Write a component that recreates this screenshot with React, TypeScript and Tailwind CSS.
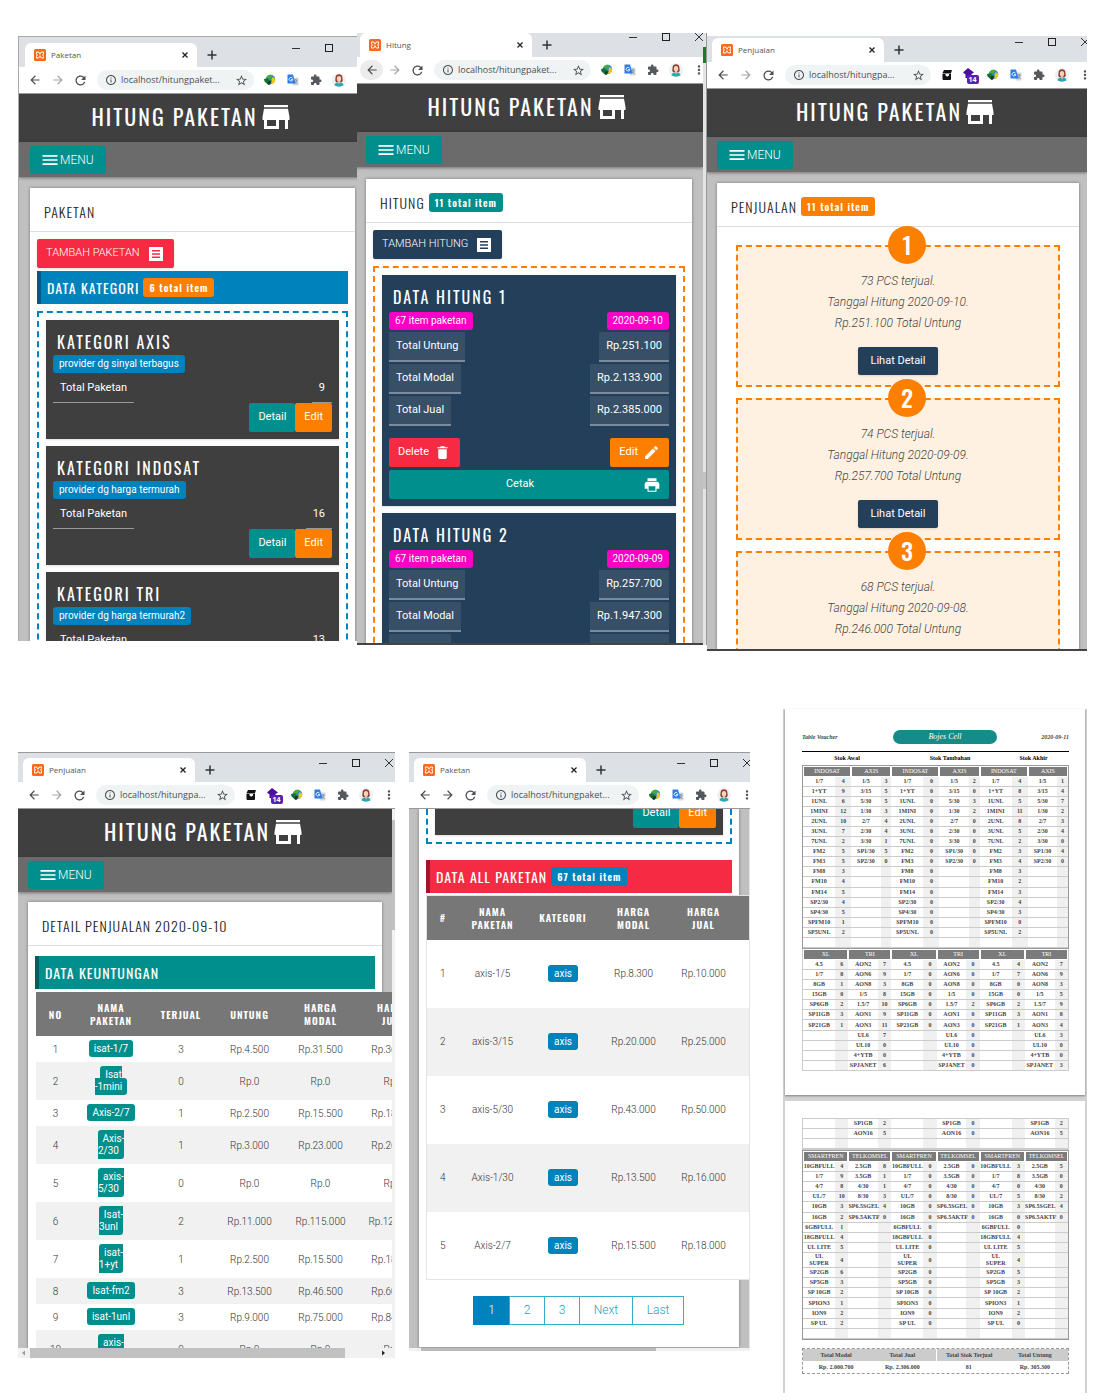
import type { ReactNode } from "react";
import { MdArrowBack, MdArrowForward, MdInfoOutline, MdMoreVert, MdRefresh, MdStarBorder } from "react-icons/md";
import { IoMdCreate, IoMdMenu, IoMdPrint, IoMdTrash } from "react-icons/io";

/* ---------- icons ---------- */

function Favicon() {
  return (
    <svg viewBox="0 0 24 24" className="size-3 shrink-0" aria-hidden="true">
      <rect width="24" height="24" rx="3" fill="#fb6a1c" />
      <path
        d="M5 6H8Q11 6 11 9V10H13V9Q13 6 16 6H19V9Q19 12 17 12Q19 12 19 15V18H16Q13 18 13 15V14H11V15Q11 18 8 18H5V15Q5 12 7 12Q5 12 5 9Z"
        fill="none"
        stroke="#fff"
        strokeWidth="2"
      />
    </svg>
  );
}

function StoreIcon() {
  return (
    <svg viewBox="0 0 24 24" className="size-9 shrink-0" fill="currentColor" aria-hidden="true">
      <path d="M20 4H4v1.500h16V4zm1 10v-2l-1-5.500H4l-1 5.500v2h1v6h10v-6h4v6h2v-6h1zm-9 4H6v-4h6v4z" />
    </svg>
  );
}

function ListIcon() {
  return (
    <svg viewBox="0 0 14 14" className="size-[14px] shrink-0" aria-hidden="true">
      <path d="M0 0H14V14H0ZM3 3V4.500H11V3ZM3 6.250V7.750H11V6.250ZM3 9.500V11H11V9.500Z" fill="currentColor" fillRule="evenodd" />
    </svg>
  );
}

function PuzzleIcon() {
  return (
    <svg viewBox="0 0 24 24" className="size-3" fill="#55595e" aria-hidden="true">
      <path d="M20.500 11H19V7c0-1.100-.9-2-2-2h-4V3.500C13 2.120 11.880 1 10.500 1S8 2.120 8 3.500V5H4c-1.100 0-1.990.9-1.990 2v3.800H3.500c1.490 0 2.700 1.210 2.700 2.700s-1.210 2.700-2.700 2.700H2V20c0 1.100.9 2 2 2h3.800v-1.500c0-1.490 1.210-2.700 2.700-2.700 1.490 0 2.700 1.210 2.700 2.700V22H17c1.100 0 2-.9 2-2v-4h1.500c1.380 0 2.500-1.120 2.500-2.500S21.880 11 20.500 11z" />
    </svg>
  );
}

function GlobeIcon() {
  return (
    <svg viewBox="0 0 24 24" className="size-3" aria-hidden="true">
      <circle cx="13" cy="11" r="9.500" fill="#1b8fd0" />
      <path d="M6 5C9 1 15 0 18 3C17 7 12 6 11 9C9 12 5 12 4 9Z" fill="#4caf2a" />
      <path d="M16 7C20 6 22 9 22.500 12C22 16 19 19 16 20C12 18 17 14 15 12Z" fill="#f2c811" />
      <path d="M0 10L9 8L9 12L14 13L9 22L1 15Z" fill="#14702c" />
      <path d="M9 14L15 15L11 22L7 20Z" fill="#153a2a" />
    </svg>
  );
}

function TranslateIcon() {
  return (
    <svg viewBox="0 0 24 24" className="size-3" aria-hidden="true">
      <rect x="11" y="7" width="12" height="16" rx="1.500" fill="#d5d8dc" />
      <path d="M14 12H21M17.500 10V12M20 12C19 16 17 18 15 19M15.500 14C17 17 19 18 21 19" stroke="#6d7b8c" strokeWidth="1.400" fill="none" />
      <path d="M2 1H12L17 19H2Q1 19 1 18V2Q1 1 2 1Z" fill="#2f7de9" />
      <path d="M11 8.500A3.600 3.600 0 1 0 11.500 11H8" stroke="#fff" strokeWidth="1.700" fill="none" />
    </svg>
  );
}

function AvatarIcon() {
  return (
    <svg viewBox="0 0 24 24" className="size-[14px]" aria-hidden="true">
      <circle cx="12" cy="12" r="12" fill="#eef1f1" />
      <path d="M12 2C6 2 6 7 6 10C5 13 6 15 8 16H16C18 15 19 13 18 10C18 7 18 2 12 2Z" fill="#8a3d33" />
      <path d="M4 21C5 17 9 16 12 16S19 17 20 21Q12 26 4 21Z" fill="#2aa7b8" />
      <path d="M10 14H14V17L12 19L10 17Z" fill="#eab995" />
      <ellipse cx="12" cy="10" rx="3.800" ry="4.800" fill="#f7d2b4" />
    </svg>
  );
}

function ArchiveIcon() {
  return (
    <svg viewBox="0 0 24 24" className="size-3" aria-hidden="true">
      <path d="M6 2H22L20 8H3Z" fill="#111" />
      <path d="M3 9H20V20Q20 22 18 22H5Q3 22 3 20Z" fill="#111" />
      <path d="M9 10H16V13L12.500 15.500L9 13Z" fill="#fff" />
    </svg>
  );
}

function CounterIcon() {
  return (
    <span className="relative block size-[14px]">
      <svg viewBox="0 0 28 28" className="size-[14px]" aria-hidden="true">
        <path d="M10 0L22 9L17 12V20H5V13L0 9Z" fill="#4a0f9f" />
      </svg>
      <span className="absolute left-1 top-[7px] rounded-[2px] bg-[#5b1fb0] px-[2px] font-['Open_Sans',sans-serif] text-[7px] font-bold leading-[9px] text-white">
        14
      </span>
    </span>
  );
}

/* ---------- browser chrome ---------- */

function ChromeButton({ label, className = "", children }: { label: string; className?: string; children: ReactNode }) {
  return (
    <button type="button" aria-label={label} className={`grid h-5 w-[23px] shrink-0 place-items-center ${className}`}>
      {children}
    </button>
  );
}

type ChromeProps = {
  title: string;
  url: string;
  id: string;
  stripClass: string;
  controlsClass: string;
  wrapClass: string;
  extra?: boolean;
  backActive?: boolean;
  forwardOn?: boolean;
};

function Chrome({ title, url, id, stripClass, controlsClass, wrapClass, extra, backActive, forwardOn }: ChromeProps) {
  return (
    <div className={`font-['Open_Sans',sans-serif] ${wrapClass}`}>
      <div className={`-mr-[5px] flex bg-[#dde0e5] ${stripClass}`}>
        <div className="flex h-6 w-[172px] shrink-0 items-center gap-[5px] rounded-t-md bg-white pl-[9px] pr-[6px]">
          <Favicon />
          <span className="flex-1 text-[8px] text-[#555]">{title}</span>
          <button type="button" aria-label="Close tab">
            <svg viewBox="0 0 12 12" className="size-3" stroke="#222" strokeWidth="1.300" aria-hidden="true">
              <path d="M3.500 3.500L8.500 8.500M8.500 3.500L3.500 8.500" />
            </svg>
          </button>
        </div>
        <button type="button" aria-label="New tab" className="ml-[9px] grid h-6 w-3 place-items-center">
          <svg viewBox="0 0 12 12" className="size-3" stroke="#333" strokeWidth="1.500" aria-hidden="true">
            <path d="M6 1.500V10.500M1.500 6H10.500" />
          </svg>
        </button>
        <div className={`ml-auto flex items-center ${controlsClass}`}>
          <button type="button" aria-label="Minimize" className="grid w-[33px] place-items-center">
            <svg viewBox="0 0 10 10" className="size-[10px]" stroke="#333" aria-hidden="true">
              <path d="M1 5.500H9" />
            </svg>
          </button>
          <button type="button" aria-label="Maximize" className="grid w-[33px] place-items-center">
            <svg viewBox="0 0 10 10" className="size-[10px]" stroke="#222" fill="none" aria-hidden="true">
              <rect x="1.500" y="1.500" width="7" height="7" />
            </svg>
          </button>
          <button type="button" aria-label="Close" className="grid w-[33px] place-items-center">
            <svg viewBox="0 0 10 10" className="size-[10px]" stroke="#333" aria-hidden="true">
              <path d="M1 1L9 9M9 1L1 9" />
            </svg>
          </button>
        </div>
      </div>
      <div className="flex h-[27px] items-center border-b border-[#999] bg-white pl-1 text-[#4b4f54]">
        <ChromeButton label="Back" className={backActive ? "rounded-full bg-[#ececec]" : ""}>
          <MdArrowBack size={14} />
        </ChromeButton>
        <ChromeButton label="Forward" className={forwardOn ? "" : "text-[#a3a6aa]"}>
          <MdArrowForward size={14} />
        </ChromeButton>
        <ChromeButton label="Reload">
          <MdRefresh size={15} />
        </ChromeButton>
        <div className="ml-[5px] mr-1 flex h-5 min-w-0 flex-1 items-center gap-1 rounded-full bg-[#f0f3f4] pl-2 pr-[6px]">
          <MdInfoOutline size={12} className="shrink-0" />
          <label htmlFor={id} className="sr-only">
            Address
          </label>
          <input id={id} readOnly value={url} className="w-0 min-w-0 flex-1 bg-transparent text-[9px] text-[#4b4f54] outline-none" />
          <button type="button" aria-label="Bookmark" className="shrink-0">
            <MdStarBorder size={13} />
          </button>
        </div>
        {extra && (
          <>
            <ChromeButton label="Archive">
              <ArchiveIcon />
            </ChromeButton>
            <ChromeButton label="Counter">
              <CounterIcon />
            </ChromeButton>
          </>
        )}
        <ChromeButton label="Download manager">
          <GlobeIcon />
        </ChromeButton>
        <ChromeButton label="Translate">
          <TranslateIcon />
        </ChromeButton>
        <ChromeButton label="Extensions">
          <PuzzleIcon />
        </ChromeButton>
        <ChromeButton label="Profile">
          <AvatarIcon />
        </ChromeButton>
        <ChromeButton label="More">
          <MdMoreVert size={14} />
        </ChromeButton>
      </div>
    </div>
  );
}

/* ---------- shared app parts ---------- */

const heading = "font-['Oswald','Liberation_Sans_Narrow','Liberation_Sans',sans-serif]";

function AppHeader({ padClass }: { padClass: string }) {
  return (
    <header>
      <div className="flex h-12 items-center justify-center bg-[#3f3f3f] pb-[3px] text-white">
        <h1 className={`${heading} whitespace-nowrap text-[22px] tracking-[2px]`}>HITUNG PAKETAN</h1>
        <StoreIcon />
      </div>
      <div className={`flex h-[35px] items-center bg-[#6b6b6b] shadow-[0_1px_3px_#0006] ${padClass}`}>
        <button type="button" className="flex h-7 items-center rounded-[2px] bg-[#008f8c] pl-[10px] pr-3 text-[12px] font-light text-white">
          <IoMdMenu size={20} />
          MENU
        </button>
      </div>
    </header>
  );
}

function Badge({ className, children }: { className: string; children: ReactNode }) {
  return (
    <span className={`${heading} rounded-[3px] px-[6px] text-[10px] font-semibold leading-[19px] tracking-[1px] text-white ${className}`}>
      {children}
    </span>
  );
}

function CardHead({ title, badge }: { title: string; badge?: ReactNode }) {
  return (
    <div className="flex h-11 items-center gap-1 border-b border-[#ddd] px-[14px] pt-1">
      <h2 className={`${heading} text-[14px] font-light tracking-[1px] text-[#222]`}>{title}</h2>
      {badge}
    </div>
  );
}

function SectionBar({ title, className, badge }: { title: string; className: string; badge?: ReactNode }) {
  return (
    <div className={`flex h-[33px] items-center gap-1 border-l-4 pl-[6px] ${className}`}>
      <h3 className={`${heading} text-[14px] tracking-[1px] text-white`}>{title}</h3>
      {badge}
    </div>
  );
}

const pill = "rounded-[3px] px-[6px] text-[10px] leading-[18px] text-white";
const btn = "flex h-[29px] items-center rounded-[2px] text-[11px] text-white";
const cardTitle = `${heading} pl-1 text-[16px] leading-6 tracking-[2px]`;

/* ---------- Paketan ---------- */

const categories = [
  { name: "KATEGORI AXIS", note: "provider dg sinyal terbagus", total: 9 },
  { name: "KATEGORI INDOSAT", note: "provider dg harga termurah", total: 16 },
  { name: "KATEGORI TRI", note: "provider dg harga termurah2", total: 13 },
];

function CategoryActions() {
  return (
    <div className="flex justify-end">
      <button type="button" className={`${btn} bg-[#008f8c] px-[9px]`}>
        Detail
      </button>
      <button type="button" className={`${btn} bg-[#fc7f00] px-[9px]`}>
        Edit
      </button>
    </div>
  );
}

function PaketanWindow() {
  return (
    <section className="mt-[3px] flex h-[605px] flex-col overflow-hidden border-l border-t border-[#a8a8a8] bg-[#c0c0c0]">
      <Chrome id="url-1" title="Paketan" url="localhost/hitungpaket..." wrapClass="-mr-[16px]" stripClass="pl-[6px] pt-[6px]" controlsClass="h-[10px]" />
      <div className="-mr-[9px]">
        <AppHeader padClass="pl-[11px]" />
        <div className="px-[11px] pt-[11px]">
          <div className="bg-white shadow-[0_0_3px_#0006]">
            <CardHead title="PAKETAN" />
            <div className="p-[7px]">
              <button type="button" className={`${btn} gap-[9px] bg-[#f62b43] pl-[9px] pr-[11px] font-light shadow`}>
                TAMBAH PAKETAN <ListIcon />
              </button>
              <SectionBar
                title="DATA KATEGORI"
                className="mt-[3px] border-[#005a87] bg-[#0082bd]"
                badge={<Badge className="bg-[#fc7f00]">6 total item</Badge>}
              />
              <div className="mt-[7px] flex flex-col gap-[7px] border-2 border-dashed border-[#0082bd] p-[7px]">
                {categories.map((c) => (
                  <article key={c.name} className="bg-[#3f3f3f] px-[7px] pb-[7px] pt-[10px] text-white shadow">
                    <h4 className={cardTitle}>{c.name}</h4>
                    <p className="mt-px flex">
                      <span className={`${pill} bg-[#0082bd]`}>{c.note}</span>
                    </p>
                    <dl className="flex justify-between pt-px text-[11px] leading-7">
                      <dt className="border-b border-[#999] px-[7px]">Total Paketan</dt>
                      <dd className="border-b border-[#999] px-[7px]">{c.total}</dd>
                    </dl>
                    <CategoryActions />
                  </article>
                ))}
              </div>
            </div>
          </div>
        </div>
      </div>
    </section>
  );
}

/* ---------- Hitung ---------- */

const calculations = [
  { id: 1, date: "2020-09-10", rows: [["Total Untung", "Rp.251.100"], ["Total Modal", "Rp.2.133.900"], ["Total Jual", "Rp.2.385.000"]] },
  { id: 2, date: "2020-09-09", rows: [["Total Untung", "Rp.257.700"], ["Total Modal", "Rp.1.947.300"], ["Total Jual", "Rp.2.205.000"]] },
];

function HitungWindow() {
  return (
    <div className="flex h-[612px]">
      <section className="flex min-w-0 flex-1 flex-col overflow-hidden border-b-2 border-[#444] bg-[#c0c0c0]">
        <Chrome id="url-2" title="Hitung" url="localhost/hitungpaket..." wrapClass="-mr-[7px] -ml-px" stripClass="pl-1" controlsClass="h-2" backActive />
        <div className="-ml-[3px]">
          <AppHeader padClass="pl-3" />
          <div className="pl-3 pr-[11px] pt-3">
            <div className="bg-white shadow-[0_0_3px_#0006]">
              <CardHead title="HITUNG" badge={<Badge className="bg-[#008f8c]">11 total item</Badge>} />
              <div className="p-[7px]">
                <button type="button" className={`${btn} gap-[9px] bg-[#233f5a] pl-[9px] pr-[11px] font-light shadow`}>
                  TAMBAH HITUNG <ListIcon />
                </button>
                <div className="mt-[7px] flex flex-col gap-[7px] border-2 border-dashed border-[#fc7f00] p-[7px]">
                  {calculations.map((c) => (
                    <article key={c.id} className="bg-[#233f5a] px-[7px] pb-[7px] pt-[10px] text-white shadow">
                      <h4 className={cardTitle}>DATA HITUNG {c.id}</h4>
                      <p className="mt-[3px] flex justify-between">
                        <span className={`${pill} bg-[#fb00c4]`}>67 item paketan</span>
                        <span className={`${pill} bg-[#fb00c4]`}>{c.date}</span>
                      </p>
                      <dl className="text-[11px] leading-7">
                        {c.rows.map(([k, v]) => (
                          <div key={k} className="mt-[2px] flex justify-between">
                            <dt className="border-b-2 border-[#7b8b9b] bg-[#384f68] px-[7px]">{k}</dt>
                            <dd className="border-b-2 border-[#7b8b9b] bg-[#384f68] px-[7px]">{v}</dd>
                          </div>
                        ))}
                      </dl>
                      <div className="mt-3 flex justify-between">
                        <button type="button" className={`${btn} gap-[5px] bg-[#f62b43] px-[9px]`}>
                          Delete <IoMdTrash size={17} />
                        </button>
                        <button type="button" className={`${btn} gap-[5px] bg-[#fc7f00] px-[9px]`}>
                          Edit <IoMdCreate size={17} />
                        </button>
                      </div>
                      <button type="button" className={`${btn} mt-[3px] w-full bg-[#008f8c] px-2`}>
                        <span className="flex-1">Cetak</span>
                        <IoMdPrint size={18} />
                      </button>
                    </article>
                  ))}
                </div>
              </div>
            </div>
          </div>
        </div>
      </section>
      <div className="w-1 border-r border-[#999] bg-[#e4e4e4] pt-[14px]">
        <div className="h-4 bg-[#12802a]" />
        <div className="mt-[409px] h-[17px] bg-[#c4c4c4]" />
      </div>
    </div>
  );
}

/* ---------- Penjualan ---------- */

const sales = [
  { n: 1, lines: ["73 PCS terjual.", "Tanggal Hitung 2020-09-10.", "Rp.251.100 Total Untung"] },
  { n: 2, lines: ["74 PCS terjual.", "Tanggal Hitung 2020-09-09.", "Rp.257.700 Total Untung"] },
  { n: 3, lines: ["68 PCS terjual.", "Tanggal Hitung 2020-09-08.", "Rp.246.000 Total Untung"] },
];

function PenjualanWindow() {
  return (
    <section className="mt-[3px] flex h-[615px] flex-col overflow-hidden border-b-2 border-[#444] bg-[#c0c0c0]">
      <Chrome id="url-3" title="Penjualan" url="localhost/hitungpa..." wrapClass="-mr-[9px]" stripClass="pl-[5px] pt-[2px]" controlsClass="h-2" extra />
      <AppHeader padClass="pl-[10px]" />
      <div className="pl-[10px] pr-2 pt-[11px]">
        <div className="bg-white shadow-[0_0_3px_#0006]">
          <CardHead title="PENJUALAN" badge={<Badge className="bg-[#fc7f00]">11 total item</Badge>} />
          <ol className="flex flex-col gap-[11px] px-[19px] pt-[18px]">
            {sales.map((s) => (
              <li key={s.n} className="relative flex flex-col items-center border-2 border-dashed border-[#fc7f00] bg-[#fff1e2] pb-[10px] pt-6">
                <span className={`${heading} absolute -top-[21px] left-1/2 -ml-[10px] grid size-[38px] place-items-center rounded-full bg-[#fc7f00] pb-[2px] text-[24px] font-medium leading-9 text-white`}>
                  {s.n}
                </span>
                {s.lines.map((l) => (
                  <p key={l} className="text-[12px] font-light italic leading-[21px] text-[#444]">
                    {l}
                  </p>
                ))}
                <button type="button" className="mt-[13px] h-7 rounded-[2px] bg-[#233f5a] px-[13px] text-[11px] text-white shadow">
                  Lihat Detail
                </button>
              </li>
            ))}
          </ol>
        </div>
      </div>
    </section>
  );
}

/* ---------- Detail penjualan ---------- */

const profits: { name: string[]; cells: string[] }[] = [
  { name: ["isat-1/7"], cells: ["3", "Rp.4.500", "Rp.31.500", "Rp.36.000"] },
  { name: ["Isat", "-1mini"], cells: ["0", "Rp.0", "Rp.0", "Rp.0"] },
  { name: ["Axis-2/7"], cells: ["1", "Rp.2.500", "Rp.15.500", "Rp.18.000"] },
  { name: ["Axis-", "2/30"], cells: ["1", "Rp.3.000", "Rp.23.000", "Rp.26.000"] },
  { name: ["axis-", "5/30"], cells: ["0", "Rp.0", "Rp.0", "Rp.0"] },
  { name: ["Isat-", "3unl"], cells: ["2", "Rp.11.000", "Rp.115.000", "Rp.126.000"] },
  { name: ["isat-", "1+yt"], cells: ["1", "Rp.2.500", "Rp.15.500", "Rp.18.000"] },
  { name: ["Isat-fm2"], cells: ["3", "Rp.13.500", "Rp.46.500", "Rp.60.000"] },
  { name: ["isat-1unl"], cells: ["3", "Rp.9.000", "Rp.75.000", "Rp.84.000"] },
  { name: ["axis-", "3/30"], cells: ["0", "Rp.0", "Rp.0", "Rp.0"] },
];

const th = `${heading} text-[10px] font-semibold leading-[13px] tracking-[1px] text-white`;

function DetailWindow() {
  return (
    <section className="mr-[14px] mt-[43px] flex h-[606px] flex-col overflow-hidden border-t border-[#999] bg-[#c0c0c0]">
      <Chrome id="url-4" title="Penjualan" url="localhost/hitungpa..." wrapClass="-mr-[5px]" stripClass="pl-[5px] pt-[5px]" controlsClass="h-[10px]" extra />
      <div className="flex min-h-0 flex-1">
        <div className="min-w-0 flex-1 overflow-hidden">
          <AppHeader padClass="pl-[10px]" />
          <div className="px-[10px] pt-[10px]">
            <div className="bg-white pb-5 shadow-[0_0_3px_#0006]">
              <CardHead title="DETAIL PENJUALAN 2020-09-10" />
              <div className="px-[7px] pt-[10px]">
                <SectionBar title="DATA KEUNTUNGAN" className="border-[#005f5d] bg-[#008f8c]" />
                <table className="ml-px mt-[3px] w-[394px] table-fixed bg-white text-center text-[10px] font-light text-[#333]">
                  <colgroup>
                    <col className="w-[39px]" />
                    <col className="w-[72px]" />
                    <col className="w-[68px]" />
                    <col className="w-[69px]" />
                    <col className="w-[73px]" />
                    <col className="w-[73px]" />
                  </colgroup>
                  <thead className="h-11 bg-[#777]">
                    <tr>
                      <th className={th}>NO</th>
                      <th className={th}>NAMA<br />PAKETAN</th>
                      <th className={th}>TERJUAL</th>
                      <th className={th}>UNTUNG</th>
                      <th className={th}>HARGA<br />MODAL</th>
                      <th className={th}>HARGA<br />JUAL</th>
                    </tr>
                  </thead>
                  <tbody>
                    {profits.map((p, i) => (
                      <tr key={i} className="even:bg-[#f1f1f1]">
                        <td>{i + 1}</td>
                        <td className="py-[7px] leading-3">
                          <span className="rounded-[3px] bg-[#008f8c] px-[5px] py-[3px] font-normal text-white">
                            {p.name[0]}
                            {p.name[1] && (
                              <>
                                <br />
                                {p.name[1]}
                              </>
                            )}
                          </span>
                        </td>
                        {p.cells.map((c, j) => (
                          <td key={j}>{c}</td>
                        ))}
                      </tr>
                    ))}
                  </tbody>
                </table>
              </div>
            </div>
          </div>
        </div>
        <div className="w-[3px] bg-[#f1f1f1] pt-[11px]">
          <div className="h-[110px] bg-[#c1c1c1]" />
        </div>
      </div>
      <div className="flex h-[10px] items-center bg-[#f1f1f1] pr-[6px]">
        <svg viewBox="0 0 12 10" className="h-[10px] w-3" aria-hidden="true">
          <path d="M7 2.500V7.500L4 5Z" fill="#999" />
        </svg>
        <div className="h-full w-[315px] bg-[#c1c1c1]" />
        <svg viewBox="0 0 12 10" className="ml-auto h-[10px] w-3" aria-hidden="true">
          <path d="M5 2.500V7.500L8 5Z" fill="#222" />
        </svg>
      </div>
    </section>
  );
}

/* ---------- All paketan ---------- */

const packages = [
  ["axis-1/5", "Rp.8.300", "Rp.10.000"],
  ["axis-3/15", "Rp.20.000", "Rp.25.000"],
  ["axis-5/30", "Rp.43.000", "Rp.50.000"],
  ["Axis-1/30", "Rp.13.500", "Rp.16.000"],
  ["Axis-2/7", "Rp.15.500", "Rp.18.000"],
];

const pager = [
  { label: "1", cls: "w-[37px] border-[#0082bd] bg-[#0082bd] text-white" },
  { label: "2", cls: "w-9 border-[#35aec8] text-[#1f9fc0]" },
  { label: "3", cls: "w-9 border-[#35aec8] text-[#1f9fc0]" },
  { label: "Next", cls: "w-[54px] border-[#35aec8] text-[#1f9fc0]" },
  { label: "Last", cls: "w-[52px] border-[#35aec8] text-[#1f9fc0]" },
];

function AllPaketanWindow() {
  return (
    <section className="mr-[34px] mt-[43px] flex h-[599px] flex-col overflow-hidden border-t border-[#999] bg-[#c0c0c0]">
      <Chrome id="url-5" title="Paketan" url="localhost/hitungpaket..." wrapClass="-mr-[8px]" stripClass="pl-[5px] pt-[5px]" controlsClass="h-[10px]" forwardOn />
      <div className="min-h-0 flex-1 overflow-hidden border-r border-[#e4e4e4] pl-[10px] pr-[10px]">
        <div className="bg-white px-[7px] pb-[22px] shadow-[0_0_3px_#0006]">
          <div className="border-x-2 border-b-2 border-dashed border-[#0082bd] px-[7px] pb-[7px]">
            <div className="overflow-hidden bg-[#3f3f3f] px-[7px] pb-[7px] shadow">
              <div className="-mt-[10px]">
                <CategoryActions />
              </div>
            </div>
          </div>
          <SectionBar
            title="DATA ALL PAKETAN"
            className="mt-4 border-[#a3142a] bg-[#f62b43]"
            badge={<Badge className="bg-[#0082bd]">67 total item</Badge>}
          />
          <table className="mt-[2px] w-[393px] table-fixed border border-[#e4e4e4] bg-white text-center text-[10px] font-light text-[#333]">
            <colgroup>
              <col className="w-8" />
              <col className="w-[68px]" />
              <col className="w-[73px]" />
              <col className="w-[68px]" />
              <col className="w-[72px]" />
              <col />
            </colgroup>
            <thead className="h-11 bg-[#777]">
              <tr>
                <th className={th}>#</th>
                <th className={th}>NAMA<br />PAKETAN</th>
                <th className={th}>KATEGORI</th>
                <th className={th}>HARGA<br />MODAL</th>
                <th className={th}>HARGA<br />JUAL</th>
                <td></td>
              </tr>
            </thead>
            <tbody>
              {packages.map(([name, modal, jual], i) => (
                <tr key={name} className="h-[68px] even:bg-[#f1f1f1]">
                  <td>{i + 1}</td>
                  <td>{name}</td>
                  <td>
                    <span className="rounded-[3px] bg-[#0082bd] px-[6px] py-[3px] font-normal text-white">axis</span>
                  </td>
                  <td>{modal}</td>
                  <td>{jual}</td>
                  <td></td>
                </tr>
              ))}
            </tbody>
          </table>
          <nav aria-label="Pages" className="mt-4 flex justify-center">
            {pager.map((p) => (
              <a key={p.label} href="#" className={`-ml-px h-[29px] border text-center text-[12px] font-light leading-[27px] ${p.cls}`}>
                {p.label}
              </a>
            ))}
          </nav>
        </div>
      </div>
      <div className="h-[3px] bg-[#f1f1f1] pl-3">
        <div className="h-full w-[235px] bg-[#bbb]" />
      </div>
    </section>
  );
}

/* ---------- printed voucher sheets ---------- */

type Item = [string, number | string, number | string, number | string];

const indosat: Item[] = [
  ["1/7", 4, 0, 4], ["1+YT", 9, 0, 8], ["1UNL", 6, 0, 5], ["1MINI", 12, 0, 11], ["2UNL", 10, 0, 8], ["3UNL", 7, 0, 5],
  ["7UNL", 2, 0, 2], ["FM2", 5, 0, 3], ["FM3", 5, 0, 4], ["FM8", 3, 0, 3], ["FM10", 4, 0, 2], ["FM14", 5, 0, 3],
  ["SP2/30", 4, 0, 4], ["SP4/30", 5, 0, 3], ["SPFM10", 1, 0, 0], ["SP5UNL", 2, 0, 2], ["", "", "", ""],
];
const axis: Item[] = [
  ["1/5", 3, 2, 1], ["3/15", 5, 0, 4], ["5/30", 5, 3, 7], ["1/30", 3, 2, 2], ["2/7", 4, 0, 3], ["2/30", 4, 0, 4],
  ["3/30", 1, 0, 0], ["SP1/30", 5, 0, 4], ["SP2/30", 0, 0, 0],
];
const xl: Item[] = [
  ["4.5", 6, 0, 4], ["1/7", 8, 0, 7], ["8GB", 1, 0, 0], ["15GB", 0, 0, 0], ["SP6GB", 2, 0, 2], ["SP11GB", 3, 0, 3], ["SP21GB", 1, 0, 1],
];
const tri: Item[] = [
  ["AON2", 7, 0, 7], ["AON6", 9, 0, 9], ["AON8", 3, 0, 3], ["1/5", 8, 0, 5], ["1.5/7", 10, 2, 9], ["AON1", 9, 0, 8],
  ["AON3", 11, 0, 4], ["UL6", 7, 0, 3], ["UL10", 0, 0, 0], ["4+YTB", 0, 0, 0], ["SPJANET", 6, 0, 3],
];
const triRest: Item[] = [["SP1GB", 2, 0, 2], ["AON16", 5, 0, 5], ["", "", "", ""]];
const smartfren: Item[] = [
  ["10GBFULL", 4, 0, 3], ["1/7", 9, 0, 8], ["4/7", 8, 0, 0], ["UL/7", 10, 0, 5], ["10GB", 3, 0, 3], ["16GB", 2, 0, 0],
  ["6GBFULL", 1, 0, 0], ["18GBFULL", 4, 0, 4], ["UL LITE", 5, 0, 5], ["UL\nSUPER", 4, 0, 4], ["SP2GB", 6, 0, 5],
  ["SP5GB", 3, 0, 3], ["SP 10GB", 2, 0, 2], ["SPION3", 1, 0, 1], ["ION9", 2, 0, 2], ["SP UL", 2, 0, 0], ["", "", "", ""],
];
const telkomsel: Item[] = [
  ["2.5GB", 8, 0, 5], ["3.5GB", 1, 0, 0], ["4/30", 1, 0, 0], ["8/30", 3, 0, 2], ["SP6.5SGEL", 4, 0, 4], ["SP6.5AKTF", 0, 0, 0],
];

type StockProps = { heads?: [string, string]; left: Item[]; right: Item[]; cols: [string, string, string, string]; className: string };

function StockTable({ heads, left, right, cols, className }: StockProps) {
  const count = Math.max(left.length, right.length);
  const blank: Item = ["", "", "", ""];
  return (
    <table className={`w-full table-fixed border-separate border-spacing-0 text-center text-[6px] font-semibold leading-[7px] text-[#444] ${className}`}>
      <colgroup>
        {[0, 1, 2].flatMap((g) => cols.map((c, i) => <col key={`${g}-${i}`} className={c} />))}
      </colgroup>
      {heads && (
        <thead>
          <tr>
            {[0, 1, 2].flatMap((g) =>
              heads.map((h) => (
                <th key={`${g}-${h}`} colSpan={2} className="px-px py-px font-normal text-white">
                  <span className="block bg-[#7b7b7b] leading-[9px]">{h}</span>
                </th>
              )),
            )}
          </tr>
        </thead>
      )}
      <tbody>
        {Array.from({ length: count }, (_, r) => (
          <tr key={r} className="h-[10px]">
            {[1, 2, 3].flatMap((g) =>
              [left[r] ?? blank, right[r] ?? blank].flatMap((item, side) => [
                <td key={`${g}-${side}-n`} className="whitespace-pre border-b border-[#ccc]">
                  {item[0]}
                </td>,
                <td key={`${g}-${side}-v`} className="border-b border-[#ccc] bg-[#f0f0f0]">
                  {item[g]}
                </td>,
              ]),
            )}
          </tr>
        ))}
      </tbody>
    </table>
  );
}

function Sheets() {
  return (
    <section className="-ml-px flex flex-col gap-[6px] bg-[#d2d2d2] px-[2px] font-['Liberation_Serif',serif]">
      <div className="h-[386px] bg-white pl-[17px] pr-4 pt-[21px] shadow-[0_1px_2px_#0006]">
        <div className="flex items-center text-[6px] font-bold italic text-[#444]">
          <span className="w-[91px]">Table Voucher</span>
          <span className="w-[104px] rounded-full bg-[#168c8a] text-center text-[8px] font-normal leading-[14px] text-white">Bojes Cell</span>
          <span className="flex-1 text-right">2020-09-11</span>
        </div>
        <div className="mt-[7px] grid h-[14px] grid-cols-[90fr_116fr_61fr] items-center border-t border-black text-center text-[6px] font-bold text-black">
          <span>Stok Awal</span>
          <span>Stok Tambahan</span>
          <span className="pr-[10px]">Stok Akhir</span>
        </div>
        <StockTable
          heads={["INDOSAT", "AXIS"]}
          left={indosat}
          right={axis}
          cols={["w-[12%]", "w-[6%]", "w-[11%]", "w-[4%]"]}
          className="h-[184px] border border-[#999]"
        />
        <StockTable
          heads={["XL", "TRI"]}
          left={xl}
          right={tri}
          cols={["w-[12%]", "w-[5%]", "w-[11%]", "w-[5%]"]}
          className="h-[122px] border-x border-[#ccc]"
        />
      </div>
      <div className="h-[292px] bg-white pl-[17px] pr-4 pt-[17px]">
        <StockTable left={[]} right={triRest} cols={["w-[12%]", "w-[5%]", "w-[11%]", "w-[5%]"]} className="border border-[#ccc]" />
        <StockTable
          heads={["SMARTFREN", "TELKOMSEL"]}
          left={smartfren}
          right={telkomsel}
          cols={["w-[12%]", "w-[5%]", "w-[11%]", "w-[5%]"]}
          className="h-[190px] border border-[#999]"
        />
        <table className="mt-2 w-full table-fixed border-separate border-spacing-0 border border-dashed border-[#999] text-center text-[6px] font-bold text-[#444]">
          <thead>
            <tr className="h-3 bg-[#ccc]">
              <th>Total Modal</th>
              <th>Total Jual</th>
              <th className="border-l border-white">Total Stok Terjual</th>
              <th>Total Untung</th>
            </tr>
          </thead>
          <tbody>
            <tr className="h-3">
              <td>Rp. 2.000.700</td>
              <td>Rp. 2.306.000</td>
              <td>81</td>
              <td>Rp. 305.300</td>
            </tr>
          </tbody>
        </table>
      </div>
    </section>
  );
}

export default function App() {
  return (
    <main className="min-h-[1400px] bg-white pl-[18px] pr-[13px] pt-[33px] font-['Roboto',sans-serif]">
      <div className="grid grid-cols-[339fr_350fr_380fr] items-start">
        <PaketanWindow />
        <HitungWindow />
        <PenjualanWindow />
      </div>
      <div className="mt-[58px] grid grid-cols-[391fr_375fr_303fr] items-start">
        <DetailWindow />
        <AllPaketanWindow />
        <Sheets />
      </div>
    </main>
  );
}
